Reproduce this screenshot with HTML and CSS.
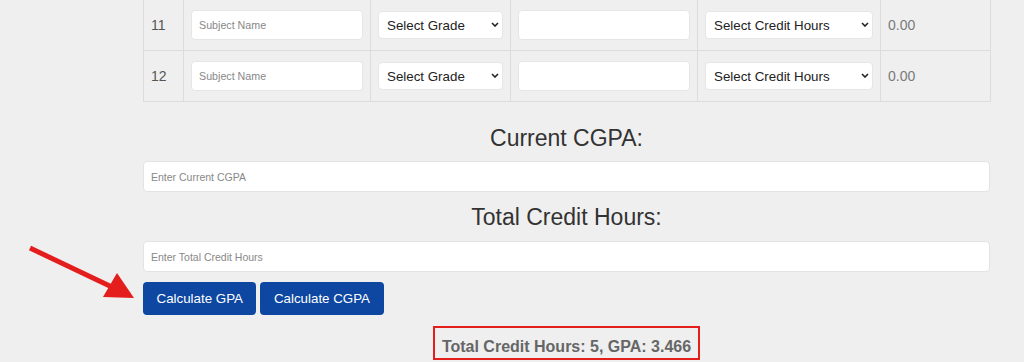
FILE: index.html
```html
<!DOCTYPE html>
<html lang="en">
<head>
  <meta charset="UTF-8" />
  <meta name="viewport" content="width=device-width, initial-scale=1.0"/>
  <title>GPA Calculator</title>
  <link rel="stylesheet" href="styles.css">
</head>
<body>

  <svg class="arrow" width="160" height="320" viewBox="0 0 160 320">
    <line x1="30" y1="248" x2="114" y2="288" stroke="#e41d1d" stroke-width="5"/>
    <polygon points="134,298 103,297 117,273" fill="#e41d1d"/>
  </svg>

  <div class="calculator">
    <table class="subjects">
      <colgroup>
        <col class="col-num">
        <col class="col-name">
        <col class="col-grade">
        <col class="col-extra">
        <col class="col-hours">
        <col class="col-points">
      </colgroup>
      <tbody>
        <tr>
          <td class="num">11</td>
          <td><input type="text" class="cell-input" placeholder="Subject Name" /></td>
          <td>
            <div class="select-wrap">
              <select class="cell-select"><option>Select Grade</option></select>
              <svg class="chevron" width="8" height="5" viewBox="0 0 8 5"><path d="M1 1 L4 4 L7 1" fill="none" stroke="#222" stroke-width="1.6"/></svg>
            </div>
          </td>
          <td><input type="text" class="cell-input" /></td>
          <td>
            <div class="select-wrap">
              <select class="cell-select"><option>Select Credit Hours</option></select>
              <svg class="chevron" width="8" height="5" viewBox="0 0 8 5"><path d="M1 1 L4 4 L7 1" fill="none" stroke="#222" stroke-width="1.6"/></svg>
            </div>
          </td>
          <td class="points">0.00</td>
        </tr>
        <tr>
          <td class="num">12</td>
          <td><input type="text" class="cell-input" placeholder="Subject Name" /></td>
          <td>
            <div class="select-wrap">
              <select class="cell-select"><option>Select Grade</option></select>
              <svg class="chevron" width="8" height="5" viewBox="0 0 8 5"><path d="M1 1 L4 4 L7 1" fill="none" stroke="#222" stroke-width="1.6"/></svg>
            </div>
          </td>
          <td><input type="text" class="cell-input" /></td>
          <td>
            <div class="select-wrap">
              <select class="cell-select"><option>Select Credit Hours</option></select>
              <svg class="chevron" width="8" height="5" viewBox="0 0 8 5"><path d="M1 1 L4 4 L7 1" fill="none" stroke="#222" stroke-width="1.6"/></svg>
            </div>
          </td>
          <td class="points">0.00</td>
        </tr>
      </tbody>
    </table>

    <h2 class="label">Current CGPA:</h2>
    <input type="text" class="wide-input" placeholder="Enter Current CGPA" />

    <h2 class="label label-second">Total Credit Hours:</h2>
    <input type="text" class="wide-input" placeholder="Enter Total Credit Hours" />

    <div class="actions">
      <button class="btn">Calculate GPA</button>
      <button class="btn">Calculate CGPA</button>
    </div>

    <div class="result">
      <span class="result-box">Total Credit Hours: 5, GPA: 3.466</span>
    </div>
  </div>

</body>
</html>
```

FILE: styles.css
```css
body {
  margin: 0;
  font-family: "Liberation Sans", Arial, sans-serif;
  background-color: #efefef;
  color: #333;
  overflow: hidden;
}

.arrow {
  position: absolute;
  left: 0;
  top: 0;
}

.calculator {
  width: 847px;
  margin-left: 143px;
}

.subjects {
  width: 847px;
  table-layout: fixed;
  border-collapse: collapse;
  margin-top: -1px;
}

.col-num { width: 40px; }
.col-name { width: 187px; }
.col-grade { width: 140px; }
.col-extra { width: 187px; }
.col-hours { width: 183px; }
.col-points { width: 110px; }

.subjects td {
  border: 1px solid #dcdcdc;
  padding: 10px 7px;
  height: 30px;
  vertical-align: middle;
  font-size: 14px;
}

.num {
  color: #555;
}

.points {
  color: #7a7a7a;
}

.cell-input {
  display: block;
  box-sizing: border-box;
  width: 100%;
  height: 30px;
  padding: 0 7px;
  border: 1px solid #e6e6e6;
  border-radius: 4px;
  background-color: #fff;
  font-family: "Liberation Sans", Arial, sans-serif;
  font-size: 10.7px;
}

.cell-input::placeholder,
.wide-input::placeholder {
  color: #888;
}

.select-wrap {
  position: relative;
}

.cell-select {
  display: block;
  box-sizing: border-box;
  width: 100%;
  height: 28px;
  padding: 0 8px;
  border: 1px solid #e6e6e6;
  border-radius: 4px;
  background-color: #fff;
  color: #222;
  font-family: "Liberation Sans", Arial, sans-serif;
  font-size: 13.33px;
  appearance: none;
  -webkit-appearance: none;
}

.chevron {
  position: absolute;
  right: 4px;
  top: 11px;
}

.label {
  margin: 22px 0 9px;
  font-size: 23px;
  line-height: 28px;
  font-weight: normal;
  text-align: center;
  color: #333;
}

.label-second {
  margin-top: 11px;
  margin-bottom: 10px;
}

.wide-input {
  display: block;
  box-sizing: border-box;
  width: 100%;
  height: 31px;
  padding: 0 7px;
  border: 1px solid #e3e3e3;
  border-radius: 4px;
  background-color: #fff;
  font-family: "Liberation Sans", Arial, sans-serif;
  font-size: 10.5px;
}

.actions {
  display: flex;
  gap: 4px;
  margin-top: 10px;
}

.btn {
  height: 33px;
  padding: 0 13.5px;
  background-color: #0d47a1;
  color: #fff;
  border: none;
  border-radius: 4px;
  font-family: "Liberation Sans", Arial, sans-serif;
  font-size: 13.33px;
  cursor: pointer;
}

.btn:hover {
  background-color: #0b3d8c;
}

.result {
  margin-top: 11px;
  text-align: center;
}

.result-box {
  display: inline-block;
  padding: 10px 7px 2px;
  border: 2px solid #e41d1d;
  font-size: 16px;
  line-height: 18px;
  font-weight: bold;
  color: #666;
}
```
